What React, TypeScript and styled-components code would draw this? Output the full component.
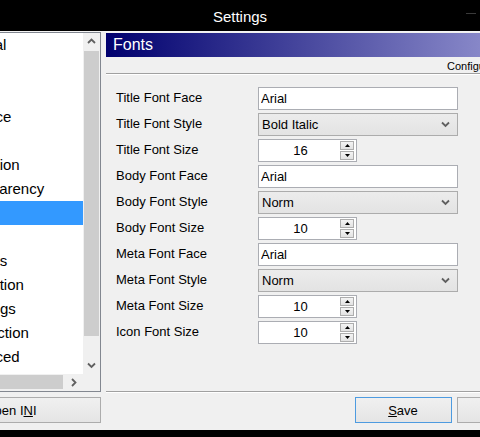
import React, { FC } from 'react';
import styled, { createGlobalStyle } from 'styled-components';

/* ---------- STYLES ---------- */

const GlobalStyle = createGlobalStyle`
    html, body {
        margin: 0;
        padding: 0;
        background: #000000;
        overflow: hidden;
    }
    * {
        box-sizing: border-box;
    }
`;

const SScreen = styled.div`
    width: 480px;
    height: 437px;
    background: #000000;
    overflow: hidden;
    display: flex;
    flex-direction: column;
    font-family: 'Liberation Sans', Arial, sans-serif;
`;

const STitleBar = styled.div`
    height: 31px;
    flex: 0 0 31px;
    display: flex;
    align-items: center;
    justify-content: center;
    position: relative;
    color: #ffffff;
    font-size: 15px;
    padding-top: 1px;
`;

const SMinimize = styled.div`
    position: absolute;
    right: 4px;
    top: 13px;
    width: 10px;
    height: 1px;
    background: #3a3a3a;
`;

const SClient = styled.div`
    height: 399px;
    flex: 0 0 399px;
    background: #f0f0f0;
    border-top: 1px solid #f4f4f4;
    display: flex;
    gap: 5px;
    margin-left: -80px;
`;

/* left column */

const SLeftCol = styled.div`
    flex: 0 0 181px;
    display: flex;
    flex-direction: column;
    gap: 5px;
`;

const SListBox = styled.div`
    height: 360px;
    flex: 0 0 360px;
    border: 1px solid #828790;
    background: #ffffff;
    display: grid;
    grid-template-columns: 1fr 17px;
    grid-template-rows: 1fr 17px;
`;

const SItems = styled.div`
    overflow: hidden;
`;

const SItem = styled.div<{ $selected?: boolean }>`
    height: 24px;
    line-height: 24px;
    padding-left: 32px;
    font-size: 15px;
    white-space: nowrap;
    color: ${(p) => (p.$selected ? '#ffffff' : '#000000')};
    background: ${(p) => (p.$selected ? '#3399ff' : 'transparent')};
`;

const SVScroll = styled.div`
    display: flex;
    flex-direction: column;
    background: #f0f0f0;
`;

const SHScroll = styled.div`
    display: flex;
    background: #f0f0f0;
`;

const SArrowBox = styled.div`
    flex: 0 0 17px;
    height: 17px;
    width: 17px;
    display: flex;
    align-items: center;
    justify-content: center;
`;

const SVThumb = styled.div`
    height: 285px;
    margin: 1px 1px 0 1px;
    background: #cdcdcd;
`;

const SVTrack = styled.div`
    flex: 1;
`;

const SHThumb = styled.div`
    width: 125px;
    margin: 1px 0 2px 0;
    background: #cdcdcd;
`;

const SHTrack = styled.div`
    flex: 1;
`;

const SCorner = styled.div`
    background: #f0f0f0;
`;

/* right column */

const SRightCol = styled.div`
    flex: 0 0 460px;
    display: flex;
    flex-direction: column;
`;

const SHeader = styled.div`
    height: 24px;
    flex: 0 0 24px;
    margin-top: 1px;
    padding-left: 7px;
    display: flex;
    align-items: center;
    color: #ffffff;
    font-size: 16px;
    background: linear-gradient(90deg, #00006e 0%, #a8a8de 100%);
`;

const SConfigNote = styled.div`
    height: 16px;
    flex: 0 0 16px;
    padding-left: 341px;
    font-size: 11px;
    line-height: 18px;
    color: #000000;
    white-space: nowrap;
`;

const SEtched = styled.div`
    height: 2px;
    flex: 0 0 2px;
    border-top: 1px solid #a0a0a0;
    border-bottom: 1px solid #ffffff;
`;

const SForm = styled.div`
    flex: 1;
    padding: 12px 0 0 10px;
    display: grid;
    grid-template-columns: 142px 200px;
    grid-auto-rows: 23px;
    row-gap: 3px;
    align-content: start;
`;

const SLabel = styled.div`
    font-size: 13px;
    line-height: 22px;
    color: #000000;
    white-space: nowrap;
`;

const STextBox = styled.input`
    width: 200px;
    height: 23px;
    border: 1px solid #abadb3;
    background: #ffffff;
    font-family: 'Liberation Sans', Arial, sans-serif;
    font-size: 13px;
    padding: 0 0 0 2px;
    color: #000000;
    outline: none;
`;

const SCombo = styled.div`
    width: 200px;
    height: 23px;
    border: 1px solid #acacac;
    background: linear-gradient(#ececec, #e3e3e3);
    display: flex;
    align-items: center;
    justify-content: space-between;
    padding: 0 7px 0 3px;
    font-size: 13px;
    color: #000000;
`;

const SSpinner = styled.div`
    width: 99px;
    height: 23px;
    border: 1px solid #abadb3;
    background: #ffffff;
    display: flex;
    align-items: center;
`;

const SSpinValue = styled.div`
    flex: 1;
    text-align: center;
    font-size: 13px;
    padding-left: 2px;
`;

const SSpinButtons = styled.div`
    width: 14px;
    height: 19px;
    margin-right: 2px;
    display: flex;
    flex-direction: column;
    gap: 1px;
`;

const SSpinButton = styled.div`
    flex: 1;
    border: 1px solid #adadad;
    background: linear-gradient(#f4f4f4, #e2e2e2);
    display: flex;
    align-items: center;
    justify-content: center;
`;

const SButtonRow = styled.div`
    height: 37px;
    flex: 0 0 37px;
    display: flex;
    justify-content: flex-end;
    align-items: flex-start;
    gap: 5px;
    padding: 4px 17px 0 0;
`;

const SButton = styled.div<{ $default?: boolean; $width?: number }>`
    width: ${(p) => p.$width ?? 97}px;
    height: 26px;
    border: 1px solid ${(p) => (p.$default ? '#4d9be0' : '#acacac')};
    background: linear-gradient(#f0f0f0, #e5e5e5);
    display: flex;
    align-items: center;
    justify-content: center;
    font-size: 13px;
    color: #000000;
    white-space: nowrap;
`;

const SSideButton = styled(SButton)`
    flex: 0 0 26px;
`;

const SDialogButton = styled(SButton)`
    flex: 0 0 ${(p) => p.$width ?? 97}px;
`;

/* ---------- ICONS ---------- */

const Chevron: FC<{ dir: 'up' | 'down' | 'right' }> = ({ dir }) => {
    const points = {
        up: '1,5 4.5,1.5 8,5',
        down: '1,1.5 4.5,5 8,1.5',
        right: '2,1 5.5,4.5 2,8',
    }[dir];
    return (
        <svg width="9" height={dir === 'right' ? 9 : 7} viewBox={dir === 'right' ? '0 0 9 9' : '0 0 9 7'}>
            <polyline points={points} fill="none" stroke="#606060" strokeWidth="1.8" />
        </svg>
    );
};

const SpinArrow: FC<{ up?: boolean }> = ({ up }) => (
    <svg width="5" height="3" viewBox="0 0 5 3">
        <polygon points={up ? '0,3 2.5,0 5,3' : '0,0 2.5,3 5,0'} fill="#000000" />
    </svg>
);

/* ---------- DATA ---------- */

const items = [
    'General',
    'Skins',
    'Layout',
    'Interface',
    'Effects',
    'Animation',
    'Transparency',
    'Fonts',
    'Icons',
    'Hotkeys',
    'Navigation',
    'Warnings',
    'Connection',
    'Advanced',
];

type Field =
    | { label: string; kind: 'text'; value: string }
    | { label: string; kind: 'combo'; value: string }
    | { label: string; kind: 'spin'; value: number };

const fields: Field[] = [
    { label: 'Title Font Face', kind: 'text', value: 'Arial' },
    { label: 'Title Font Style', kind: 'combo', value: 'Bold Italic' },
    { label: 'Title Font Size', kind: 'spin', value: 16 },
    { label: 'Body Font Face', kind: 'text', value: 'Arial' },
    { label: 'Body Font Style', kind: 'combo', value: 'Norm' },
    { label: 'Body Font Size', kind: 'spin', value: 10 },
    { label: 'Meta Font Face', kind: 'text', value: 'Arial' },
    { label: 'Meta Font Style', kind: 'combo', value: 'Norm' },
    { label: 'Meta Font Size', kind: 'spin', value: 10 },
    { label: 'Icon Font Size', kind: 'spin', value: 10 },
];

/* ---------- COMPONENT ---------- */

const FieldControl: FC<{ field: Field }> = ({ field }) => {
    if (field.kind === 'text') {
        return <STextBox defaultValue={field.value} readOnly />;
    }
    if (field.kind === 'combo') {
        return (
            <SCombo>
                <span>{field.value}</span>
                <Chevron dir="down" />
            </SCombo>
        );
    }
    return (
        <SSpinner>
            <SSpinValue>{field.value}</SSpinValue>
            <SSpinButtons>
                <SSpinButton>
                    <SpinArrow up />
                </SSpinButton>
                <SSpinButton>
                    <SpinArrow />
                </SSpinButton>
            </SSpinButtons>
        </SSpinner>
    );
};

const App: FC = () => (
    <>
        <GlobalStyle />
        <SScreen>
            <STitleBar>
                Settings
                <SMinimize />
            </STitleBar>
            <SClient>
                <SLeftCol>
                    <SListBox>
                        <SItems>
                            {items.map((item) => (
                                <SItem key={item} $selected={item === 'Fonts'}>
                                    {item}
                                </SItem>
                            ))}
                        </SItems>
                        <SVScroll>
                            <SArrowBox>
                                <Chevron dir="up" />
                            </SArrowBox>
                            <SVThumb />
                            <SVTrack />
                            <SArrowBox>
                                <Chevron dir="down" />
                            </SArrowBox>
                        </SVScroll>
                        <SHScroll>
                            <SArrowBox />
                            <SHThumb />
                            <SHTrack />
                            <SArrowBox>
                                <Chevron dir="right" />
                            </SArrowBox>
                        </SHScroll>
                        <SCorner />
                    </SListBox>
                    <SSideButton $width={181}>
                        Open I<u>N</u>I
                    </SSideButton>
                </SLeftCol>
                <SRightCol>
                    <SHeader>Fonts</SHeader>
                    <SConfigNote>Configuration: settings.ini</SConfigNote>
                    <SEtched />
                    <SForm>
                        {fields.map((field) => (
                            <React.Fragment key={field.label}>
                                <SLabel>{field.label}</SLabel>
                                <FieldControl field={field} />
                            </React.Fragment>
                        ))}
                    </SForm>
                    <SEtched />
                    <SButtonRow>
                        <SDialogButton $default>
                            <span>
                                <u>S</u>ave
                            </span>
                        </SDialogButton>
                        <SDialogButton>Cancel</SDialogButton>
                    </SButtonRow>
                </SRightCol>
            </SClient>
        </SScreen>
    </>
);

export default App;
